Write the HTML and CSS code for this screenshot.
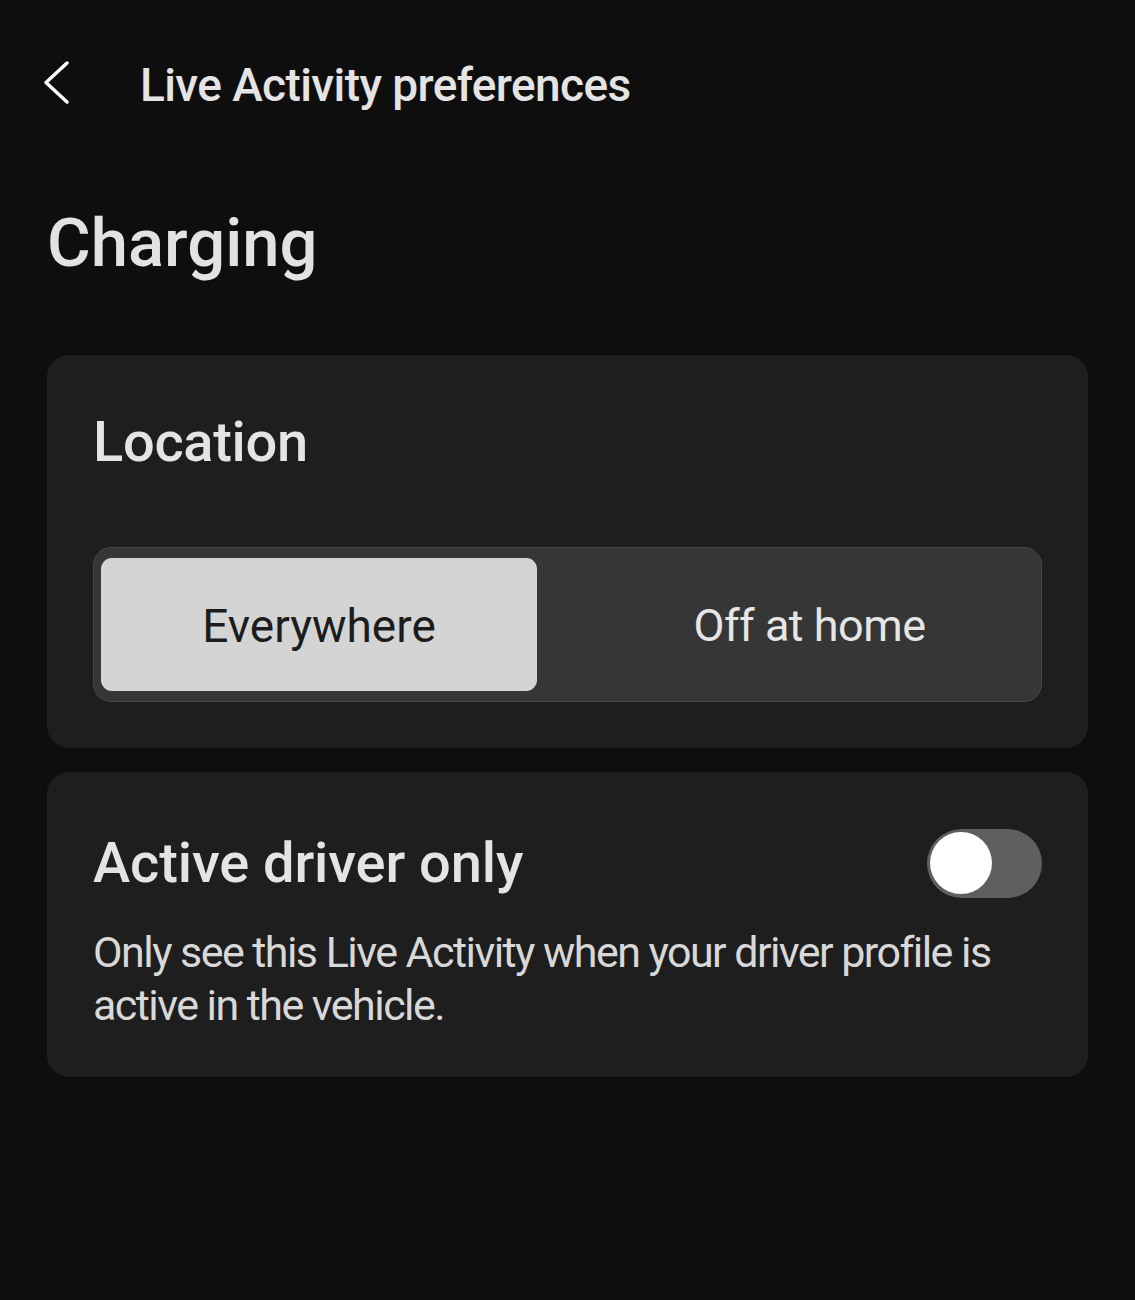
FILE: index.html
```html
<!DOCTYPE html>
<html lang="en">
<head>
<meta charset="utf-8">
<title>Live Activity preferences</title>
<link rel="stylesheet" href="styles.css">
</head>
<body>
<header class="topbar">
  <button class="back" aria-label="Back">
    <svg width="30" height="46" viewBox="0 0 30 46"><polyline points="23,3 2,22.5 23,42" fill="none" stroke="#ffffff" stroke-width="3.4" stroke-linecap="round" stroke-linejoin="round"/></svg>
  </button>
  <h1 class="title">Live Activity preferences</h1>
</header>
<main class="content">
  <h2 class="section">Charging</h2>
  <section class="card card-location">
    <h3 class="card-title">Location</h3>
    <div class="segmented">
      <div class="seg seg-active">Everywhere</div>
      <div class="seg seg-off">Off at home</div>
    </div>
  </section>
  <section class="card card-driver">
    <div class="row">
      <h3 class="card-title row-title">Active driver only</h3>
      <div class="toggle"><span class="knob"></span></div>
    </div>
    <p class="desc">Only see this Live Activity when your driver profile is active in the vehicle.</p>
  </section>
</main>
</body>
</html>
```
FILE: styles.css
```css
html, body {
  margin: 0;
  padding: 0;
  background: #0e0e0e;
}
body {
  font-family: Roboto, "Noto Sans", sans-serif;
  color: #e2e2e2;
  width: 1135px;
  height: 1300px;
}
.topbar {
  display: flex;
  align-items: flex-start;
  padding: 57px 0 0 44px;
}
.back {
  background: none;
  border: 0;
  padding: 0;
  width: 30px;
  height: 46px;
  margin: 3px 66px 0 0;
  display: block;
}
.back svg { display: block; }
.title {
  margin: 0;
  font-size: 46px;
  line-height: 56px;
  font-weight: 500;
  letter-spacing: -0.6px;
  color: #e4e4e4;
}
.content {
  padding: 0 47px;
}
.section {
  margin: 92px 0 74px;
  font-size: 67px;
  line-height: 76px;
  font-weight: 500;
  color: #e2e2e2;
}
.card {
  background: #1e1e1e;
  border-radius: 22px;
  padding: 46px;
}
.card-title {
  margin: 0;
  font-size: 56px;
  line-height: 64px;
  font-weight: 500;
  color: #e4e4e4;
}
.card-location .card-title {
  margin-top: 9px;
  letter-spacing: -0.3px;
}
.segmented {
  margin-top: 73px;
  height: 155px;
  box-sizing: border-box;
  border: 1px solid #474747;
  background: #363636;
  border-radius: 18px;
  padding: 10px 7px;
  display: grid;
  grid-template-columns: 436px 1fr;
}
.seg {
  display: flex;
  align-items: center;
  justify-content: center;
  font-size: 46px;
  font-weight: 400;
  padding-top: 2px;
}
.seg-active {
  background: #d4d4d4;
  color: #1c1c1c;
  border-radius: 11px;
}
.seg-off {
  color: #e6e6e6;
  padding-left: 48px;
  font-size: 45px;
  letter-spacing: -0.5px;
}
.card-driver {
  margin-top: 24px;
  padding: 56px 46px 45px;
}
.row {
  display: flex;
  align-items: center;
  justify-content: space-between;
  height: 70px;
}
.row-title {
  font-size: 56px;
  line-height: 70px;
  font-weight: 500;
  letter-spacing: -0.1px;
}
.toggle {
  width: 115px;
  height: 69px;
  border-radius: 35px;
  background: #5f5f5f;
  display: flex;
  align-items: center;
  padding-left: 3px;
  box-sizing: border-box;
}
.knob {
  width: 62px;
  height: 62px;
  border-radius: 50%;
  background: #ffffff;
  display: block;
}
.desc {
  margin: 28px 0 0;
  font-size: 43px;
  line-height: 53px;
  font-weight: 400;
  letter-spacing: -1.55px;
  color: #d8d8d8;
  max-width: 940px;
}
```
